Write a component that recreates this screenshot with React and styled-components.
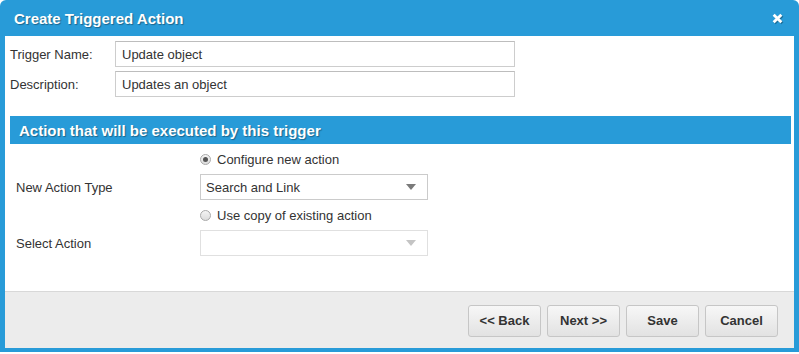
import React from 'react';
import styled, { createGlobalStyle } from 'styled-components';

const Global = createGlobalStyle`
  html, body {
    margin: 0;
    padding: 0;
    background: #fff;
  }
  body {
    font-family: 'Liberation Sans', Arial, sans-serif;
    font-size: 13px;
    color: #333;
  }
`;

const blue = '#289bd8';

const Dialog = styled.div`
  width: 799px;
  height: 352px;
  box-sizing: border-box;
  background: ${blue};
  border-radius: 6px 6px 0 0;
  padding: 0 5px 4px 5px;
  display: flex;
  flex-direction: column;
`;

const TitleBar = styled.div`
  height: 36px;
  display: flex;
  align-items: center;
  justify-content: space-between;
  padding: 0 11px 0 9px;
  h1 {
    margin: 0;
    font-size: 15px;
    font-weight: bold;
    color: #fff;
    text-shadow: 1px 1px 1px rgba(0, 0, 0, 0.35);
    padding-top: 1px;
  }
`;

const Close = styled.svg`
  width: 11px;
  height: 11px;
  margin-top: 1px;
  filter: drop-shadow(1px 1px 0 rgba(0, 0, 0, 0.3));
`;

const Body = styled.div`
  flex: 1;
  background: #fff;
  display: flex;
  flex-direction: column;
`;

const Content = styled.div`
  flex: 1;
  padding: 5px 3px 0 5px;
`;

const FieldRow = styled.div`
  display: flex;
  align-items: center;
  margin-bottom: 4px;
  label {
    width: 105px;
  }
`;

const TextInput = styled.input`
  width: 400px;
  height: 26px;
  box-sizing: border-box;
  border: 1px solid #cdcdcd;
  border-top-color: #bdbdbd;
  padding: 0 6px;
  font-family: inherit;
  font-size: 13px;
  color: #333;
  outline: none;
`;

const Section = styled.div`
  margin-top: 19px;
  height: 28px;
  background: ${blue};
  color: #fff;
  font-weight: bold;
  font-size: 15px;
  display: flex;
  align-items: center;
  padding: 0 9px;
  text-shadow: 1px 1px 1px rgba(0, 0, 0, 0.35);
`;

const Grid = styled.div`
  display: grid;
  grid-template-columns: 184px 228px;
  row-gap: 7px;
  align-items: center;
  padding: 7px 0 0 6px;
`;

const GridLabel = styled.div`
  grid-column: 1;
`;

const Cell = styled.div`
  grid-column: 2;
`;

const RadioRow = styled.label`
  display: flex;
  align-items: center;
  height: 16px;
`;

const RadioDot = styled.span`
  width: 11px;
  height: 11px;
  box-sizing: border-box;
  border-radius: 50%;
  border: 1px solid #a9a9a9;
  background: linear-gradient(#f4f4f4, #dcdcdc);
  margin-right: 6px;
  display: flex;
  align-items: center;
  justify-content: center;
  &::after {
    content: '';
    display: ${p => (p.$checked ? 'block' : 'none')};
    width: 5px;
    height: 5px;
    border-radius: 50%;
    background: #555;
  }
`;

const Select = styled.div`
  height: 26px;
  box-sizing: border-box;
  border: 1px solid ${p => (p.$disabled ? '#e0e0e0' : '#cbcbcb')};
  display: flex;
  align-items: center;
  padding: 0 11px 0 5px;
  color: #333;
  &::after {
    content: '';
    margin-left: auto;
    border-left: 5px solid transparent;
    border-right: 5px solid transparent;
    border-top: 6px solid ${p => (p.$disabled ? '#c4c4c4' : '#7a7a7a')};
  }
`;

const Footer = styled.div`
  height: 57px;
  box-sizing: border-box;
  border-top: 1px solid #d8d8d8;
  background: #ececec;
  display: flex;
  align-items: center;
  justify-content: flex-end;
  gap: 6px;
  padding: 0 16px 0 0;
`;

const Button = styled.button`
  width: 73px;
  height: 32px;
  border: 1px solid #c6c6c6;
  border-radius: 3px;
  background: linear-gradient(#f7f7f7, #e2e2e2);
  font-family: inherit;
  font-size: 13px;
  font-weight: bold;
  color: #333;
  padding: 0;
  margin-top: 1px;
`;

export default function App() {
  return (
    <>
      <Global />
      <Dialog>
        <TitleBar>
          <h1>Create Triggered Action</h1>
          <Close viewBox="0 0 10 10">
            <path d="M1.5 1.5 L8.5 8.5 M8.5 1.5 L1.5 8.5" stroke="#fff" strokeWidth="2.6" />
          </Close>
        </TitleBar>
        <Body>
          <Content>
            <FieldRow>
              <label>Trigger Name:</label>
              <TextInput defaultValue="Update object" />
            </FieldRow>
            <FieldRow>
              <label>Description:</label>
              <TextInput defaultValue="Updates an object" />
            </FieldRow>
            <Section>Action that will be executed by this trigger</Section>
            <Grid>
              <Cell>
                <RadioRow><RadioDot $checked />Configure new action</RadioRow>
              </Cell>
              <GridLabel>New Action Type</GridLabel>
              <Cell>
                <Select>Search and Link</Select>
              </Cell>
              <Cell>
                <RadioRow><RadioDot />Use copy of existing action</RadioRow>
              </Cell>
              <GridLabel>Select Action</GridLabel>
              <Cell>
                <Select $disabled />
              </Cell>
            </Grid>
          </Content>
          <Footer>
            <Button>&lt;&lt; Back</Button>
            <Button>Next &gt;&gt;</Button>
            <Button>Save</Button>
            <Button>Cancel</Button>
          </Footer>
        </Body>
      </Dialog>
    </>
  );
}
